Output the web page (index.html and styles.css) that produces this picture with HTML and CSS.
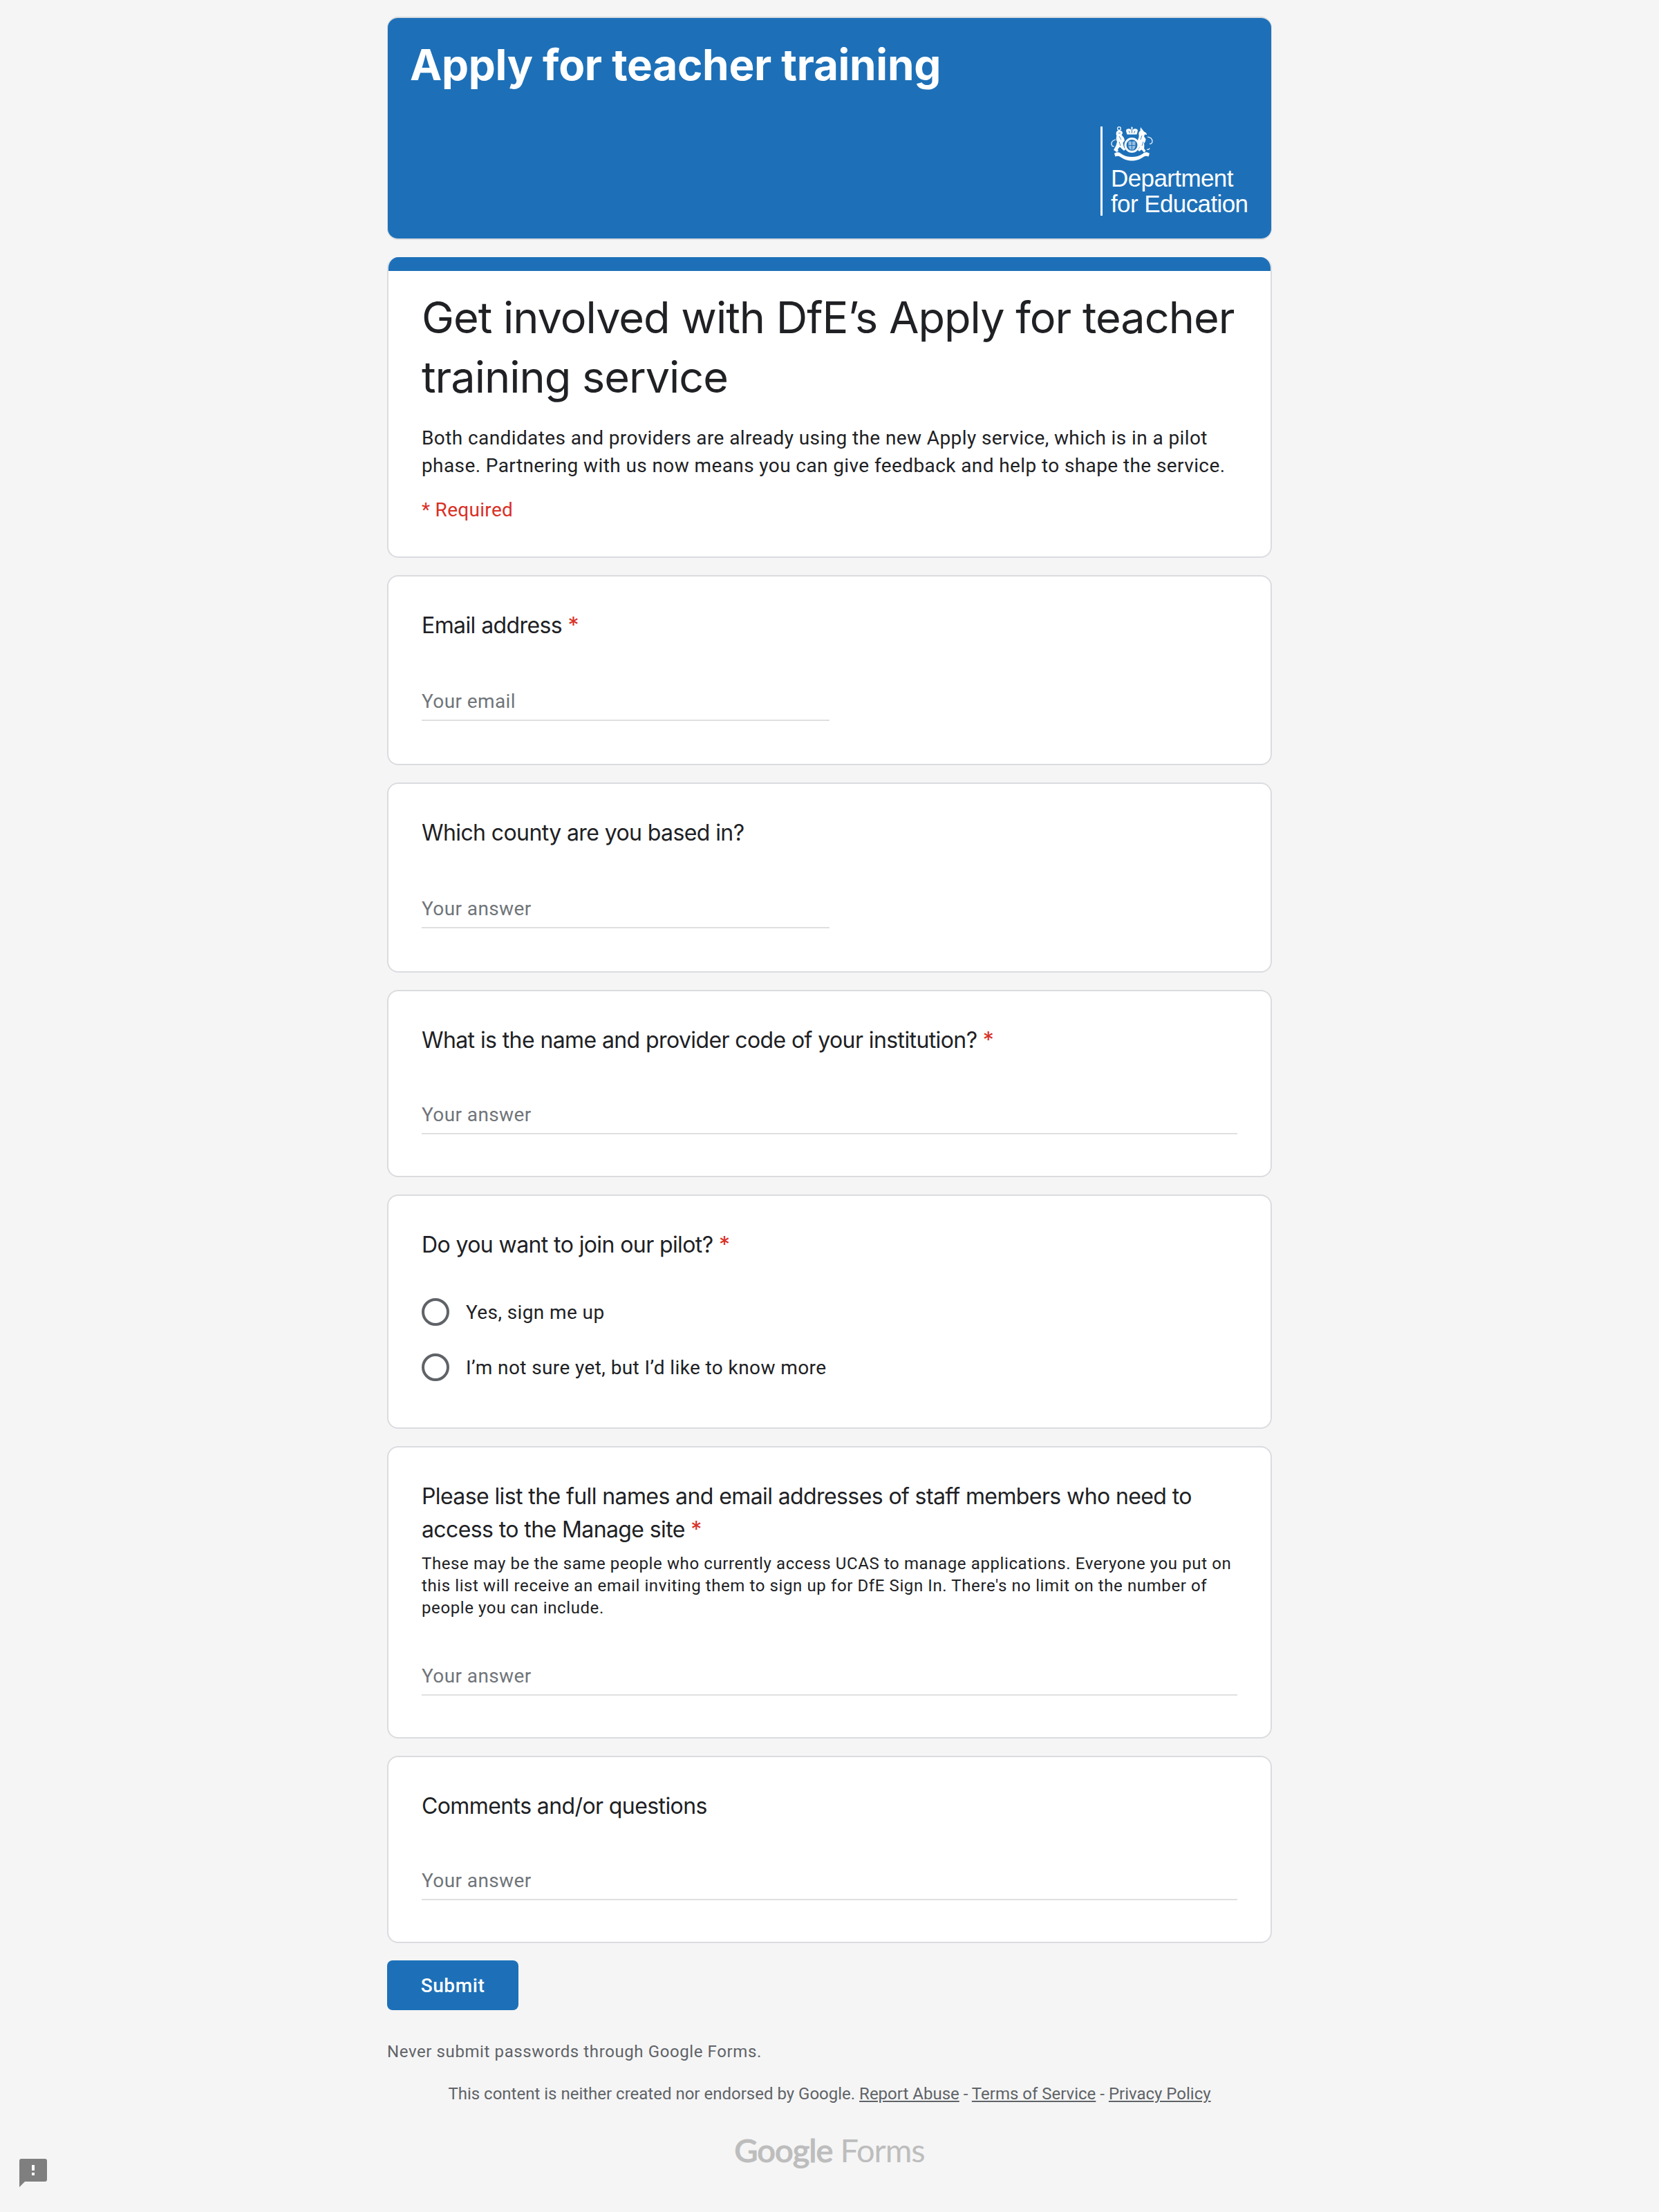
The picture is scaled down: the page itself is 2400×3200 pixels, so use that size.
FILE: index.html
```html
<!DOCTYPE html>
<html lang="en">
<head>
  <meta charset="UTF-8" />
  <title>Apply for teacher training</title>
  <link rel="stylesheet" href="styles.css">
</head>
<body>
  <div class="container">
    <div class="banner">
      <h1>Apply for teacher training</h1>
      <div class="dfe-logo">
        <svg class="crest" width="61" height="50" viewBox="0 0 61 50">
          <!-- crown -->
          <path d="M30.5 0l1.5 2.5-1 .8v1.6c2-1.6 5-2.2 7-.8 1.6 1.2.6 4-.6 7.4H23.600c-1.200-3.400-2.200-6.200-.6-7.400 2-1.400 5-.8 7 .8V3.300l-1-.8z" fill="#fff"/>
          <path d="M26 6.500l1.500 3M35 6.500l-1.500 3M30.500 5v4.500" stroke="#1d70b8" stroke-width="1"/>
          <!-- lion -->
          <circle cx="12" cy="3" r="2.400" fill="none" stroke="#fff" stroke-width="1.200"/>
          <path d="M8 8c1-2.500 6-3 8-1 1.500 1.500 1 4-.5 5l3.500 4.500 1 4-2.500 3c.5 3 1 5.500 2 7.500l2 2-2.500 2-3.500-3-2.500-2.500-3 3.500 1 2.500-2.500 1.500L4 34l3.500-6.500L9 22c-1.500-2.500-1.500-6-.5-8.500-1-1.500-1-3.500-.5-5.500z" fill="#fff"/>
          <path d="M7 19c-4 1-6.500 3.500-6 7 .3 2 2 3 3.500 2.500" fill="none" stroke="#fff" stroke-width="1.200"/>
          <path d="M11 9.500h3M12 14l3 5M12 22l2 6" stroke="#1d70b8" stroke-width=".8"/>
          <!-- unicorn -->
          <path d="M43 1l5 6.500c2.500 .5 4 2.500 4 4.500l-3-.5-1 3 2.500 3.500c0 3-1 5-2.500 6.500 .5 2.500 .5 5 0 7l2.500 4-2.500 2-3.500-4-3.500 2.500-2-2 2.500-3.500-1-4.500c-1.500-2.500-2-5-1-8 1-2 1.500-4 1-6.500-.5-2.500 .5-4 2-5z" fill="#fff"/>
          <path d="M53 15c4 .5 7 3 7 6.500 0 2.500-2 4-4 3.500M52 33c2 1 3.500 0 4-1.500" fill="none" stroke="#fff" stroke-width="1.200"/>
          <path d="M45 13l-2 6M47 22l-2 6" stroke="#1d70b8" stroke-width=".8"/>
          <!-- garter and shield -->
          <circle cx="30.500" cy="27" r="9.500" fill="none" stroke="#fff" stroke-width="3"/>
          <path d="M25.500 21.500h10v7c0 3-2.500 5-5 6-2.500-1-5-3-5-6z" fill="#fff" opacity=".55"/>
          <path d="M30.500 21v13.500M25.500 27.500h10" stroke="#1d70b8" stroke-width="1"/>
          <!-- motto ribbon -->
          <path d="M5 39c4-2.500 7-2 10 .5 4 3 10 4.500 15.500 4.500s11.500-1.500 15.500-4.500c3-2.500 6-3 10-.5l-1.500 4.500c-3-1.500-5.500-1-8 1-4 3-10.500 5-16 5s-12-2-16-5c-2.500-2-5-2.500-8-1z" fill="#fff"/>
        </svg>
        <div class="dfe-name">Department<br>for Education</div>
      </div>
    </div>

    <div class="card intro-card">
      <div class="accent"></div>
      <div class="intro-body">
        <h2>Get involved with DfE’s Apply for teacher training service</h2>
        <p class="intro-text">Both candidates and providers are already using the new Apply service, which is in a pilot phase. Partnering with us now means you can give feedback and help to shape the service.</p>
        <div class="required-note">* Required</div>
      </div>
    </div>

    <div class="card question q-half">
      <div class="q-title">Email address <span class="star">*</span></div>
      <div class="answer half">Your email</div>
    </div>

    <div class="card question q-half">
      <div class="q-title">Which county are you based in?</div>
      <div class="answer half">Your answer</div>
    </div>

    <div class="card question q-full">
      <div class="q-title">What is the name and provider code of your institution? <span class="star">*</span></div>
      <div class="answer">Your answer</div>
    </div>

    <div class="card question q-radio">
      <div class="q-title">Do you want to join our pilot? <span class="star">*</span></div>
      <div class="option"><span class="radio"></span>Yes, sign me up</div>
      <div class="option"><span class="radio"></span>I’m not sure yet, but I’d like to know more</div>
    </div>

    <div class="card question q-long">
      <div class="q-title">Please list the full names and email addresses of staff members who need to access to the Manage site <span class="star">*</span></div>
      <div class="q-help">These may be the same people who currently access UCAS to manage applications. Everyone you put on this list will receive an email inviting them to sign up for DfE Sign In. There's no limit on the number of people you can include.</div>
      <div class="answer">Your answer</div>
    </div>

    <div class="card question q-full">
      <div class="q-title">Comments and/or questions</div>
      <div class="answer">Your answer</div>
    </div>

    <button class="submit-btn">Submit</button>
    <div class="never">Never submit passwords through Google Forms.</div>
    <div class="legal">This content is neither created nor endorsed by Google. <a href="#">Report Abuse</a> - <a href="#">Terms of Service</a> - <a href="#">Privacy Policy</a></div>
    <div class="forms-logo"><span class="google-word">Google</span> <span class="forms-word">Forms</span></div>
  </div>

  <svg class="report-icon" width="40" height="41" viewBox="0 0 40 41">
    <path d="M3 0h34a3 3 0 0 1 3 3v27a3 3 0 0 1-3 3H8l-8 8V3a3 3 0 0 1 3-3z" fill="#7f7f7f"/>
    <path d="M18 9h4v8h-4zM18 20h4v4h-4z" fill="#fff"/>
  </svg>
</body>
</html>
```

FILE: styles.css
```css
* {
  box-sizing: border-box;
}

body {
  margin: 0;
  background: #f5f5f5;
  font-family: Roboto, Arial, sans-serif;
  color: #202124;
  min-height: 3200px;
  position: relative;
}

.container {
  width: 1280px;
  margin: 0 auto;
  padding-top: 24px;
}

.banner {
  height: 323px;
  background: #1d70b8;
  border-radius: 16px;
  border: 2px solid #dadce0;
  border-width: 2px 1px;
  padding: 32px 32px 0;
  position: relative;
  margin-bottom: 25px;
}

.banner h1 {
  margin: 0;
  font-family: Inter, Arial, sans-serif;
  font-size: 62px;
  line-height: 72px;
  font-weight: 700;
  letter-spacing: -0.3px;
  color: #fff;
}

.dfe-logo {
  position: absolute;
  left: 1031px;
  top: 157px;
  height: 129px;
  border-left: 3px solid #fff;
  padding-left: 12px;
}

.crest {
  display: block;
}

.dfe-name {
  margin-top: 6px;
  font-family: "Liberation Sans", Arial, sans-serif;
  font-size: 35px;
  line-height: 37px;
  color: #fff;
  letter-spacing: -0.6px;
  white-space: nowrap;
}

.card {
  background: #fff;
  border: 2px solid #dadce0;
  border-radius: 16px;
  margin-bottom: 25px;
}

.intro-card {
  height: 435px;
  overflow: hidden;
  border-top: none;
}

.accent {
  height: 20px;
  background: #1d70b8;
  margin: 0 -2px;
}

.intro-body {
  padding: 24px 48px 0;
}

.intro-body h2 {
  margin: 0;
  font-family: Inter, Arial, sans-serif;
  font-size: 63px;
  line-height: 86px;
  font-weight: 400;
  letter-spacing: -1px;
}

.intro-text {
  margin: 26px 0 0;
  font-size: 28px;
  line-height: 40px;
  letter-spacing: 0.4px;
}

.required-note {
  margin-top: 24px;
  font-size: 28px;
  line-height: 40px;
  letter-spacing: 0.3px;
  color: #d93025;
}

.question {
  padding: 47px 48px 0;
}

.q-half {
  height: 275px;
}

.q-full {
  height: 271px;
}

.q-radio {
  height: 339px;
}

.q-long {
  height: 423px;
}

.q-title {
  font-family: Inter, Arial, sans-serif;
  font-size: 32px;
  line-height: 48px;
  letter-spacing: -0.6px;
}

.star {
  color: #d93025;
}

.q-help {
  font-size: 24px;
  line-height: 32px;
  letter-spacing: 0.6px;
  margin-top: 9px;
}

.answer {
  margin-top: 62px;
  height: 50px;
  line-height: 44px;
  font-size: 28px;
  letter-spacing: 0.4px;
  color: #70757a;
  border-bottom: 2px solid #e0e0e0;
}

.answer.half {
  margin-top: 64px;
  width: 590px;
}

.q-help + .answer {
  margin-top: 61px;
}

.option {
  display: flex;
  align-items: center;
  height: 40px;
  margin-top: 40px;
  font-size: 28px;
  letter-spacing: 0.4px;
}

.q-title + .option {
  margin-top: 53px;
}

.radio {
  width: 40px;
  height: 40px;
  border: 4px solid #5f6368;
  border-radius: 50%;
  margin-right: 24px;
}

.submit-btn {
  display: block;
  width: 190px;
  height: 72px;
  background: #1d70b8;
  border: none;
  border-radius: 8px;
  font-family: Roboto, Arial, sans-serif;
  font-size: 28px;
  font-weight: 500;
  letter-spacing: 0.6px;
  color: #fff;
}

.never {
  margin-top: 43px;
  font-size: 24px;
  line-height: 34px;
  letter-spacing: 0.6px;
  color: #5f6368;
}

.legal {
  margin-top: 27px;
  font-size: 24px;
  line-height: 34px;
  text-align: center;
  color: #5f6368;
}

.legal a {
  color: #5f6368;
}

.forms-logo {
  margin-top: 34px;
  text-align: center;
  font-family: Lato, Arial, sans-serif;
  font-size: 47px;
  line-height: 60px;
  letter-spacing: -1px;
  color: #bdbdbd;
}

.google-word {
  font-weight: 500;
  -webkit-text-stroke: 1px #bdbdbd;
}

.report-icon {
  position: absolute;
  left: 28px;
  top: 3123px;
}
```
